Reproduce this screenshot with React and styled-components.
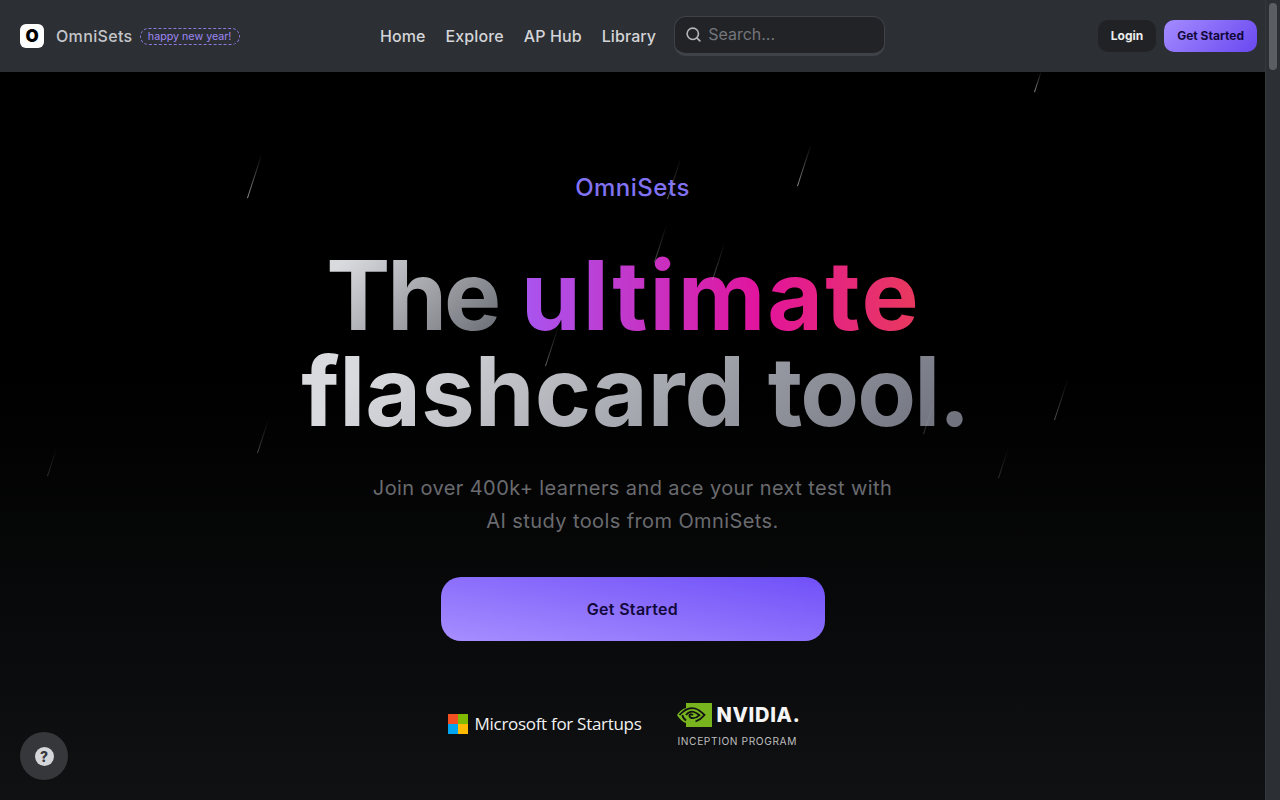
import React from "react";
import styled, { createGlobalStyle } from "styled-components";
import { Search } from "lucide-react";

const font = `"Inter", "Open Sans", "Liberation Sans", sans-serif`;

const GlobalStyle = createGlobalStyle`
  html, body {
    margin: 0;
    height: 100%;
    background: #000;
    overflow: hidden;
  }
  * {
    box-sizing: border-box;
  }
`;

const Screen = styled.div`
  display: grid;
  grid-template-columns: 1fr 15px;
  height: 800px;
  font-family: ${font};
`;

const Rail = styled.div`
  background: #2c2f33;
  border-left: 1px solid #35383c;
  padding: 3px 3px 3px 3px;
`;

const Thumb = styled.div`
  height: 67px;
  border-radius: 5px;
  background: #5b5e63;
`;

const Page = styled.div`
  position: relative;
  overflow: hidden;
  display: flex;
  flex-direction: column;
  background: linear-gradient(#000 0, #000 380px, #101113 100%);
`;

const Header = styled.header`
  height: 72px;
  flex: none;
  display: grid;
  grid-template-columns: 360px 1fr auto;
  align-items: center;
  padding: 0 8px 0 20px;
  background: #2c2f33;
`;

const Brand = styled.div`
  display: flex;
  align-items: center;
`;

const LogoMark = styled.div`
  width: 24px;
  height: 24px;
  border-radius: 6px;
  background: #fff;
  color: #000;
  display: flex;
  align-items: center;
  justify-content: center;
  font-size: 17px;
  font-weight: 900;
`;

const BrandName = styled.span`
  margin-left: 12px;
  font-size: 16px;
  font-weight: 500;
  letter-spacing: 0.35px;
  color: #c4c6ca;
`;

const Tag = styled.span`
  margin-left: 7px;
  height: 17px;
  width: 100px;
  border: 1px dashed #8e78e0;
  border-radius: 9px;
  color: #9d87f5;
  font-size: 10.7px;
  line-height: 15px;
  text-align: center;
  white-space: nowrap;
`;

const NavRow = styled.div`
  display: flex;
  align-items: center;
`;

const NavLink = styled.a`
  margin-right: 20px;
  font-size: 16px;
  font-weight: 500;
  letter-spacing: 0.1px;
  color: #d4d5d8;
`;

const SearchBox = styled.div`
  margin-left: -2px;
  width: 211px;
  height: 40px;
  display: flex;
  align-items: center;
  gap: 6px;
  padding: 0 10px 2px;
  border: 1px solid #3f4247;
  border-bottom-width: 3px;
  border-radius: 12px;
  background: #212327;
  color: #74767b;
  font-size: 16px;
`;

const Actions = styled.div`
  display: flex;
  gap: 8px;
`;

const HeaderButton = styled.button`
  height: 32px;
  border: 0;
  border-radius: 10px;
  padding: 0 13px 2px;
  font-family: ${font};
  font-size: 12px;
  font-weight: 700;
  color: ${(p) => (p.$primary ? "#12093a" : "#eceded")};
  background: ${(p) =>
    p.$primary ? "linear-gradient(135deg, #a48bff, #6a48f0)" : "#202226"};
`;

const Hero = styled.main`
  position: relative;
  flex: 1;
  display: flex;
  flex-direction: column;
  align-items: center;
  padding-top: 102px;
`;

const Eyebrow = styled.div`
  font-size: 24px;
  line-height: 28px;
  font-weight: 500;
  letter-spacing: 0.5px;
  color: #8172f3;
`;

const Headline = styled.h1`
  margin: 45px 0 0;
  font-size: 96px;
  line-height: 96px;
  font-weight: 700;
  text-align: center;
  white-space: nowrap;
`;

const Silver = styled.span`
  display: inline-block;
  margin-left: ${(p) => p.$nudge || 0}px;
  background: linear-gradient(135deg, #d9dade 12%, ${(p) => p.$end} 95%);
  -webkit-background-clip: text;
  background-clip: text;
  color: transparent;
`;

const Word = styled.span`
  letter-spacing: ${(p) => p.$ls}px;
`;

const Accent = styled.span`
  display: inline-block;
  margin-right: 18px;
  letter-spacing: 2.1px;
  background: linear-gradient(90deg, #a855f0, #e2149c 60%, #e93a5c);
  -webkit-background-clip: text;
  background-clip: text;
  color: transparent;
`;

const Lead = styled.p`
  margin: 33px 0 0;
  font-size: 20px;
  line-height: 33px;
  letter-spacing: 0.4px;
  text-align: center;
  color: #6a6b6f;
`;

const CtaButton = styled.button`
  margin-top: 39px;
  width: 384px;
  height: 64px;
  border: 0;
  border-radius: 20px;
  font-family: ${font};
  font-size: 16px;
  font-weight: 600;
  letter-spacing: 0.3px;
  color: #12093a;
  background: linear-gradient(to bottom left, #7050f8, #a78eff);
`;

const Partners = styled.div`
  margin: 62px 17px 0 0;
  display: flex;
  align-items: flex-start;
  gap: 36px;
`;

const Microsoft = styled.div`
  display: flex;
  align-items: center;
  gap: 7px;
  margin-top: 9px;
  font-size: 17px;
  line-height: 24px;
  letter-spacing: -0.3px;
  font-family: "Open Sans", sans-serif;
  color: #f2f2f2;
`;

const MsGrid = styled.div`
  display: grid;
  grid-template-columns: 10px 10px;
  grid-auto-rows: 10px;
`;

const MsCell = styled.span`
  background: ${(p) => p.$color};
`;

const Nvidia = styled.div`
  display: flex;
  flex-direction: column;
`;

const NvidiaRow = styled.div`
  display: flex;
  align-items: center;
  gap: 4px;
`;

const NvidiaName = styled.span`
  font-size: 20px;
  line-height: 24px;
  font-weight: 800;
  letter-spacing: 0.7px;
  color: #f5f5f5;
`;

const NvidiaSub = styled.span`
  margin-top: 8px;
  font-size: 10.2px;
  line-height: 12px;
  letter-spacing: 0.6px;
  color: #bdbdbd;
`;

const HelpButton = styled.div`
  position: absolute;
  left: 20px;
  bottom: 20px;
  width: 48px;
  height: 48px;
  border-radius: 50%;
  background: #36373a;
  display: flex;
  align-items: center;
  justify-content: center;
`;

const HelpDot = styled.span`
  width: 19px;
  height: 19px;
  border-radius: 50%;
  background: #d5d6d9;
  color: #36373a;
  font-size: 14px;
  font-weight: 800;
  line-height: 19px;
  text-align: center;
`;

const Streak = styled.span`
  position: absolute;
  left: ${(p) => p.$x}px;
  top: ${(p) => p.$y}px;
  width: 1px;
  height: ${(p) => p.$h}px;
  transform: rotate(18deg);
  transform-origin: bottom left;
  background: linear-gradient(transparent, rgba(170, 170, 175, ${(p) => p.$a}));
`;

const streaks = [
  [247, 152, 46, 0.85],
  [797, 142, 44, 0.8],
  [1034, 70, 22, 0.8],
  [667, 155, 44, 0.5],
  [654, 222, 40, 0.45],
  [712, 240, 40, 0.45],
  [545, 322, 44, 0.55],
  [1054, 376, 44, 0.45],
  [257, 417, 36, 0.4],
  [923, 396, 38, 0.3],
  [47, 446, 30, 0.25],
  [998, 446, 32, 0.25],
];

const navItems = ["Home", "Explore", "AP Hub", "Library"];

export default function App() {
  return (
    <>
      <GlobalStyle />
      <Screen>
        <Page>
          <Header>
            <Brand>
              <LogoMark>O</LogoMark>
              <BrandName>OmniSets</BrandName>
              <Tag>happy new year!</Tag>
            </Brand>
            <NavRow>
              {navItems.map((item) => (
                <NavLink key={item}>{item}</NavLink>
              ))}
              <SearchBox>
                <Search size={17} strokeWidth={2.3} color="#b5b6b9" />
                Search...
              </SearchBox>
            </NavRow>
            <Actions>
              <HeaderButton>Login</HeaderButton>
              <HeaderButton $primary>Get Started</HeaderButton>
            </Actions>
          </Header>
          <Hero>
            <Eyebrow>OmniSets</Eyebrow>
            <Headline>
              <Silver $end="#6c6f76">
                <Word $ls={-3}>The</Word>
              </Silver>{" "}
              <Accent>ultimate</Accent>
              <br />
              <Silver $end="#71747f" $nudge={5}>
                <Word $ls={0}>flashcard</Word> <Word $ls={-1.8}>tool.</Word>
              </Silver>
            </Headline>
            <Lead>
              Join over 400k+ learners and ace your next test with
              <br />
              AI study tools from OmniSets.
            </Lead>
            <CtaButton>Get Started</CtaButton>
            <Partners>
              <Microsoft>
                <MsGrid>
                  <MsCell $color="#f25022" />
                  <MsCell $color="#7fba00" />
                  <MsCell $color="#00a4ef" />
                  <MsCell $color="#ffb900" />
                </MsGrid>
                Microsoft for Startups
              </Microsoft>
              <Nvidia>
                <NvidiaRow>
                  <svg width="35" height="24" viewBox="0 0 35 24">
                    <path
                      fill="#78b41e"
                      d="M9 5V0h26v24H9v-4C5 19 2 15 0 12c2-3 5-6 9-7z"
                    />
                    <path
                      fill="none"
                      stroke="#101113"
                      strokeWidth="1.8"
                      d="M2.5 12C7 7 13 4 18 5.5c4 1.2 7 4 9.5 6.5-2 2.5-5 5-9 6.5M9 17.5c-2-1.5-3.500-3.500-3.500-5.500"
                    />
                    <path
                      fill="none"
                      stroke="#101113"
                      strokeWidth="1.8"
                      d="M9 12c2-2.500 5-4 8-3 2.500.8 4 2 5.500 3.200-1.500 1.500-4 3-6.500 3-2.500 0-4-1.500-3.500-3.200 1-1 2.500-1 3.500.2"
                    />
                  </svg>
                  <NvidiaName>NVIDIA.</NvidiaName>
                </NvidiaRow>
                <NvidiaSub>INCEPTION PROGRAM</NvidiaSub>
              </Nvidia>
            </Partners>
          </Hero>
          {streaks.map(([x, y, h, a]) => (
            <Streak key={`${x}-${y}`} $x={x} $y={y} $h={h} $a={a} />
          ))}
          <HelpButton>
            <HelpDot>?</HelpDot>
          </HelpButton>
        </Page>
        <Rail>
          <Thumb />
        </Rail>
      </Screen>
    </>
  );
}
